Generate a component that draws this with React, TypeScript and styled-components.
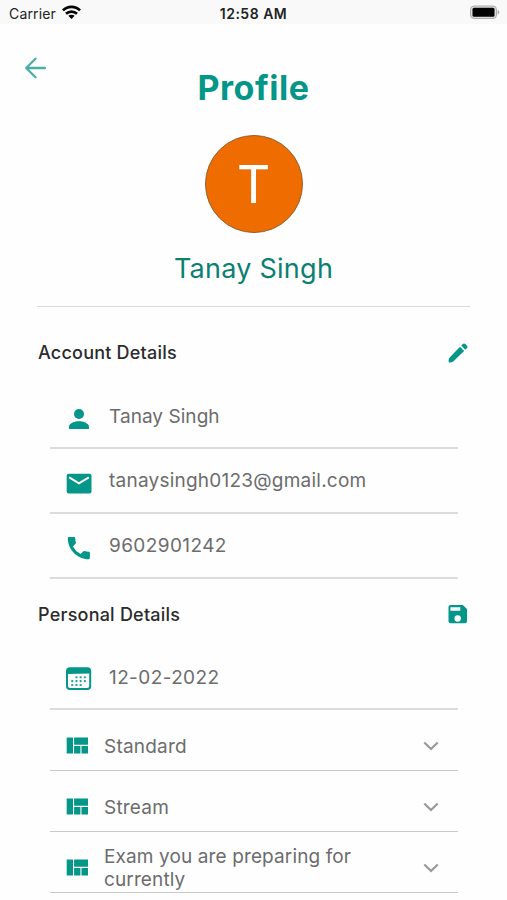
import React from "react";
import styled, { createGlobalStyle } from "styled-components";

const TEAL = "#049688";

const GlobalStyle = createGlobalStyle`
  * { box-sizing: border-box; }
  body { margin: 0; background: #fefefe; font-family: Inter, "Liberation Sans", sans-serif; }
`;

const Screen = styled.main`
  width: 507px;
  height: 900px;
  overflow: hidden;
  background: #fefefe;
  display: flex;
  flex-direction: column;
`;

const StatusBar = styled.div`
  flex: none;
  height: 24px;
  padding: 4px 7px 0 9px;
  background: #f9f9f9;
  display: grid;
  grid-template-columns: 1fr auto 1fr;
  line-height: 20px;
  color: #222;
`;

const Carrier = styled.div`
  display: flex;
  gap: 6px;
  font-size: 14px;
  letter-spacing: 0.15px;
  svg { margin-top: 1px; }
`;

const Clock = styled.div`
  font-size: 14px;
  font-weight: 600;
  letter-spacing: 0.5px;
  margin-right: 2px;
`;

const BatterySlot = styled.div`
  display: flex;
  justify-content: flex-end;
  padding-top: 1px;
`;

const Header = styled.header`
  flex: none;
  height: 111px;
  padding: 32px 24px 0;
  display: grid;
  grid-template-columns: 24px 1fr 24px;
`;

const BackButton = styled.button`
  width: 24px;
  height: 24px;
  padding: 0;
  border: 0;
  background: none;
`;

const Title = styled.h1`
  margin: 12px 0 0;
  text-align: center;
  font-size: 34px;
  line-height: 40px;
  font-weight: 700;
  letter-spacing: 0.5px;
  color: ${TEAL};
`;

const Identity = styled.section`
  flex: none;
  height: 172px;
  margin: 0 37px;
  border-bottom: 1px solid #d9d9d9;
  display: flex;
  flex-direction: column;
  align-items: center;
`;

const Avatar = styled.div`
  width: 98px;
  height: 98px;
  border: 1px solid #92602f;
  border-radius: 50%;
  background: #ef6c00;
  color: #fff;
  font-size: 52px;
  line-height: 98px;
  text-align: center;
`;

const DisplayName = styled.div`
  margin-top: 19px;
  font-size: 27px;
  line-height: 34px;
  letter-spacing: 0.25px;
  color: #0a8072;
`;

const SectionHead = styled.div<{ $height: number }>`
  flex: none;
  height: ${(p) => p.$height}px;
  padding: 0 37px 0 38px;
  display: flex;
  align-items: center;
  justify-content: space-between;
`;

const SectionTitle = styled.h2`
  margin: 0;
  font-size: 18px;
  line-height: 24px;
  font-weight: 500;
  letter-spacing: 0.22px;
  color: #2b2b2b;
`;

const Rows = styled.div`
  margin: 0 49px 0 50px;
`;

const DetailRow = styled.div<{ $height: number; $textLift?: number; $iconLift?: number }>`
  height: ${(p) => p.$height}px;
  padding: 0 0 19px 15px;
  border-bottom: 2px solid #dcdcdc;
  display: flex;
  align-items: flex-end;
  gap: 16px;
  svg { flex: none; margin-bottom: ${(p) => (p.$iconLift ?? 0) - 5}px; }
  span { margin-bottom: ${(p) => p.$textLift ?? 0}px; }
`;

const SelectRow = styled.div`
  height: 61px;
  padding: 11px 16px 0 16px;
  border-bottom: 1px solid #c9c9c9;
  display: grid;
  grid-template-columns: 22px 1fr 22px;
  column-gap: 16px;
  align-items: center;
`;

const Value = styled.span<{ $spacing?: number; $drop?: number }>`
  padding-top: ${(p) => p.$drop ?? 0}px;
  font-size: 19px;
  line-height: 23px;
  letter-spacing: ${(p) => p.$spacing ?? 0.3}px;
  color: #6c6c6c;
`;

const Wifi = () => (
  <svg width="19" height="15" viewBox="0 0 19 15">
    <g fill="none" stroke="#050505" strokeWidth="2.7">
      <path d="M.9 5.4C5.7.7 13.3.7 18.1 5.4" />
      <path d="M4 8.8c3.1-2.9 7.9-2.9 11 0" />
    </g>
    <path d="M6.3 10.8c1.8-1.5 4.6-1.5 6.4 0L9.5 14z" fill="#050505" />
  </svg>
);

const Battery = () => (
  <svg width="31" height="15" viewBox="0 0 31 15">
    <rect x="1.5" y="1" width="26" height="12.5" rx="3.5" fill="#ddd" stroke="#aaa" />
    <rect x="3.5" y="2.8" width="22" height="9" rx="1.5" fill="#000" />
    <path d="M28.6 5v4.5c2.3-.7 2.3-3.8 0-4.5z" fill="#aaa" />
  </svg>
);

const BackArrow = () => (
  <svg width="24" height="24" viewBox="0 0 24 24" fill="none" stroke="#4cafa3" strokeWidth="2.3" strokeLinecap="round" strokeLinejoin="round">
    <path d="M21 12H2.4M11.5 2.8 2.2 12l9.3 9.2" />
  </svg>
);

const Pencil = () => (
  <svg width="24" height="24" viewBox="0 0 24 24" fill={TEAL}>
    <path d="m14 5.8 4.1 4.1L7.5 20.3c-.5.5-1 .8-1.700.9l-2.100.2c-.7.100-1.200-.4-1.100-1.100l.2-2.200c.1-.7.400-1.200.9-1.700z" />
    <path d="m15.200 4.600 1.600-1.500c.7-.7 1.800-.7 2.500 0l1.600 1.600c.7.7.7 1.800 0 2.500l-1.600 1.500z" />
  </svg>
);

const Save = () => (
  <svg width="24" height="24" viewBox="0 0 24 24">
    <path fill={TEAL} fillRule="evenodd" d="M4.5 2H16.800L21 6v12.300c0 1.100-.9 2-2 2H4.500c-1.100 0-2-.9-2-2V4c0-1.100.9-2 2-2zm-.1 2.300v3.500h9.900V4.300zM11.700 12.300a3.200 3.200 0 1 0 0 6.400 3.200 3.200 0 0 0 0-6.400z" />
  </svg>
);

const Person = () => (
  <svg width="28" height="28" viewBox="0 0 28 28" fill={TEAL}>
    <circle cx="14" cy="9" r="5" />
    <path d="M4 24v-2.200c0-3.700 6.200-5.500 10-5.500s10 1.800 10 5.500V24z" />
  </svg>
);

const Mail = () => (
  <svg width="28" height="28" viewBox="0 0 28 28">
    <rect x="1.7" y="3.7" width="24.8" height="19.8" rx="2" fill={TEAL} />
    <path d="m4.2 7.300 9.800 6 9.800-6" fill="none" stroke="#fff" strokeWidth="2" />
  </svg>
);

const Phone = () => (
  <svg width="28" height="28" viewBox="0 0 28 28">
    <path fill={TEAL} d="M4 3h5c.7 0 1.200.5 1.200 1.200 0 1.600.3 3 .7 4.300.1.400 0 .9-.3 1.200L7.900 12.500a18 18 0 0 0 7.600 7.600l2.700-2.700c.3-.3.8-.4 1.200-.3 1.400.4 2.800.7 4.300.7.700 0 1.200.5 1.200 1.200V24c0 .7-.5 1.200-1.200 1.200C12.400 25.200 2.800 15.600 2.800 4.200 2.800 3.500 3.300 3 4 3z" />
  </svg>
);

const calendarDots = [
  [11.4, 12.2], [15.6, 12.2], [19.8, 12.2],
  [7.2, 16.1], [11.4, 16.1], [15.6, 16.1], [19.8, 16.1],
  [7.2, 20], [11.4, 20], [15.6, 20],
];

const CalendarIcon = () => (
  <svg width="28" height="28" viewBox="0 0 28 28">
    <rect x="2" y="3.2" width="23.2" height="20.8" rx="3" fill="none" stroke={TEAL} strokeWidth="2" />
    <path d="M2 9V5c0-1.5 1-2 2.5-2h18.200c1.500 0 2.500.5 2.500 2v3.500z" fill={TEAL} />
    {calendarDots.map(([x, y]) => (
      <rect key={`${x}-${y}`} x={x - 1} y={y - 1} width="2.1" height="2.1" rx=".6" fill={TEAL} opacity=".85" />
    ))}
  </svg>
);

const Quilt = () => (
  <svg width="22" height="17" viewBox="0 0 22 17" fill={TEAL}>
    <path d="M.7.5H7v16H.7zM8.1.5H22v7.300H8.100zM8.100 8.900h6.300v7.600H8.100zM15.500 8.900H22v7.600h-6.500z" />
  </svg>
);

const Chevron = () => (
  <svg width="22" height="22" viewBox="0 0 22 22" fill="none" stroke="#999" strokeWidth="2.2">
    <path d="m4.300 7.500 6.700 6.500 6.700-6.500" />
  </svg>
);

const accountRows = [
  { icon: <Person />, text: "Tanay Singh", height: 50, spacing: 0.05, textLift: 0, iconLift: 0 },
  { icon: <Mail />, text: "tanaysingh0123@gmail.com", height: 65, spacing: 0.23, textLift: 1, iconLift: 0 },
  { icon: <Phone />, text: "9602901242", height: 65, spacing: 0.4, textLift: 1, iconLift: 1 },
];

const selects = [
  { label: "Standard", spacing: 0.2, drop: 1 },
  { label: "Stream", spacing: 0.2, drop: 1 },
  { label: "Exam you are preparing for currently", spacing: 0.12, drop: 0 },
];

export default function App() {
  return (
    <>
      <GlobalStyle />
      <Screen>
        <StatusBar>
          <Carrier>Carrier <Wifi /></Carrier>
          <Clock>12:58 AM</Clock>
          <BatterySlot><Battery /></BatterySlot>
        </StatusBar>
        <Header>
          <BackButton aria-label="Back"><BackArrow /></BackButton>
          <Title>Profile</Title>
        </Header>
        <Identity>
          <Avatar>T</Avatar>
          <DisplayName>Tanay Singh</DisplayName>
        </Identity>
        <SectionHead $height={92}>
          <SectionTitle>Account Details</SectionTitle>
          <Pencil />
        </SectionHead>
        <Rows>
          {accountRows.map((row) => (
            <DetailRow key={row.text} $height={row.height} $textLift={row.textLift} $iconLift={row.iconLift}>
              {row.icon}
              <Value $spacing={row.spacing}>{row.text}</Value>
            </DetailRow>
          ))}
        </Rows>
        <SectionHead $height={72}>
          <SectionTitle>Personal Details</SectionTitle>
          <Save />
        </SectionHead>
        <Rows>
          <DetailRow $height={59} $iconLift={1}>
            <CalendarIcon />
            <Value $spacing={0.4}>12-02-2022</Value>
          </DetailRow>
          {selects.map(({ label, spacing, drop }) => (
            <SelectRow key={label}>
              <Quilt />
              <Value $spacing={spacing} $drop={drop}>{label}</Value>
              <Chevron />
            </SelectRow>
          ))}
        </Rows>
      </Screen>
    </>
  );
}
